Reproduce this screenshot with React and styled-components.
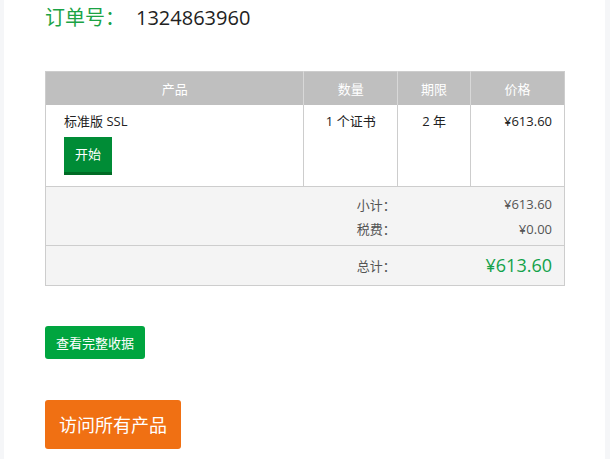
import React from "react";
import styled, { createGlobalStyle } from "styled-components";

const Global = createGlobalStyle`
  html, body { margin: 0; padding: 0; background: #f5f6f8; }
  body { font-family: "Open Sans", "Noto Sans CJK SC", sans-serif; color: #333; }
  * { box-sizing: border-box; }
`;

const Panel = styled.div`
  margin: 0 5px 0 4px;
  min-height: 459px;
  background: #fff;
  padding: 3px 0 0 41px;
`;

const Title = styled.h2`
  margin: 0;
  font-size: 20px;
  font-weight: 400;
  line-height: 30px;
  color: #222;
  display: flex;
  gap: 11px;
`;

const TitleLabel = styled.span`
  color: #1ba345;
`;

const Table = styled.table`
  margin-top: 38px;
  width: 520px;
  border-collapse: collapse;
  font-size: 13px;
  border: 1px solid #cdcdcd;
`;

const Th = styled.th`
  background: #bfbfbf;
  color: #fff;
  font-weight: 400;
  height: 33px;
  padding: 0;
  text-align: center;
  border-left: 1px solid #d8d8d8;
  &:first-child { border-left: none; }
`;

const Td = styled.td`
  vertical-align: top;
  padding: ${(p) => (p.$first ? "7px 8px 11px 18px" : "7px 12px 11px 12px")};
  text-align: ${(p) => p.$align || "center"};
  border-left: 1px solid #cdcdcd;
  color: #222;
  line-height: 18px;
  &:first-child { border-left: none; }
`;

const StartButton = styled.button`
  margin-top: 7px;
  display: block;
  width: 48px;
  height: 38px;
  border: none;
  border-bottom: 3px solid #006b25;
  background: #008c36;
  color: #fff;
  font: inherit;
  font-size: 13px;
  padding: 0;
  cursor: pointer;
`;

const SumRow = styled.tr`
  background: #f4f4f4;
  border-top: ${(p) => (p.$border ? "1px solid #cdcdcd" : "none")};
`;

const SumLabel = styled.td`
  text-align: right;
  color: #555;
  padding: ${(p) => p.$pad || "0 2px"};
  height: ${(p) => p.$h}px;
  vertical-align: middle;
`;

const SumValue = styled.td`
  text-align: right;
  color: ${(p) => (p.$total ? "#12a24a" : "#555")};
  font-size: ${(p) => (p.$total ? "18px" : "13px")};
  padding: ${(p) => p.$pad || "0 12px"};
  height: ${(p) => p.$h}px;
  vertical-align: middle;
`;

const Actions = styled.div`
  display: flex;
  flex-direction: column;
  align-items: flex-start;
  gap: 41px;
  margin-top: 40px;
`;

const ActionButton = styled.button`
  border: none;
  border-radius: 3px;
  color: #fff;
  font-family: inherit;
  cursor: pointer;
  background: ${(p) => (p.$tone === "orange" ? "#f07013" : "#00a53f")};
  font-size: ${(p) => (p.$large ? "18px" : "13px")};
  height: ${(p) => (p.$large ? "49px" : "33px")};
  padding: ${(p) => (p.$large ? "0 14px" : "0 11px")};
`;

export default function App() {
  return (
    <>
      <Global />
      <Panel>
        <Title>
          <TitleLabel>订单号：</TitleLabel>
          <span>1324863960</span>
        </Title>
        <Table>
          <colgroup>
            <col style={{ width: 259 }} />
            <col style={{ width: 94 }} />
            <col style={{ width: 73 }} />
            <col style={{ width: 94 }} />
          </colgroup>
          <thead>
            <tr>
              <Th>产品</Th>
              <Th>数量</Th>
              <Th>期限</Th>
              <Th>价格</Th>
            </tr>
          </thead>
          <tbody>
            <tr>
              <Td $first $align="left">
                标准版 SSL
                <StartButton>开始</StartButton>
              </Td>
              <Td>1 个证书</Td>
              <Td>2 年</Td>
              <Td $align="right">¥613.60</Td>
            </tr>
            <SumRow $border>
              <SumLabel colSpan={2} $h={30} $pad="6px 2px 0">小计：</SumLabel>
              <SumValue colSpan={2} $h={30} $pad="6px 12px 0">¥613.60</SumValue>
            </SumRow>
            <SumRow>
              <SumLabel colSpan={2} $h={29} $pad="0 2px 3px">税费：</SumLabel>
              <SumValue colSpan={2} $h={29} $pad="0 12px 3px">¥0.00</SumValue>
            </SumRow>
            <SumRow $border>
              <SumLabel colSpan={2} $h={40}>总计：</SumLabel>
              <SumValue colSpan={2} $h={40} $total>¥613.60</SumValue>
            </SumRow>
          </tbody>
        </Table>
        <Actions>
          <ActionButton>查看完整收据</ActionButton>
          <ActionButton $tone="orange" $large>访问所有产品</ActionButton>
        </Actions>
      </Panel>
    </>
  );
}
